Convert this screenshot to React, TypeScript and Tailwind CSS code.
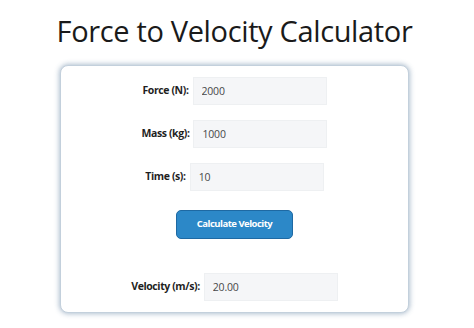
import { useState } from "react";

function Row({ label, value, onChange, readOnly }: { label: string; value: string; onChange?: (v: string) => void; readOnly?: boolean }) {
  return (
    <div className="flex items-center">
      <label className="text-[10.5px] font-bold tracking-[-0.4px] text-[#1f1f1f] mr-[4px]">{label}</label>
      <input
        className="w-[134px] h-[28px] bg-[#f5f6f8] border border-[#eef0f2] px-[8px] text-[10.5px] tracking-[-0.2px] text-[#484848] outline-none"
        value={value}
        readOnly={readOnly}
        onChange={(e) => onChange?.(e.target.value)}
      />
    </div>
  );
}

export default function App() {
  const [force, setForce] = useState("2000");
  const [mass, setMass] = useState("1000");
  const [time, setTime] = useState("10");
  const [velocity, setVelocity] = useState("20.00");

  const calc = () => {
    const v = (parseFloat(force) / parseFloat(mass)) * parseFloat(time);
    setVelocity(isNaN(v) ? "" : v.toFixed(2));
  };

  return (
    <div
      className="min-h-screen bg-white flex flex-col items-center"
      style={{ fontFamily: '"Open Sans", "Noto Sans", sans-serif' }}
    >
      <h1 className="text-[29px] tracking-[-0.35px] leading-[40px] text-[#1a1a1a] mt-[11px] ml-[-5px]">
        Force to Velocity Calculator
      </h1>
      <div className="w-[349px] mt-[14px] ml-[-5px] rounded-[8px] border border-[#c3d0dc] shadow-[0_0_5px_1px_rgba(80,115,150,0.45)] bg-white flex flex-col items-center pt-[11px] pb-[11px]">
        <div className="flex flex-col items-center gap-[15px]">
          <Row label="Force (N):" value={force} onChange={setForce} />
          <Row label="Mass (kg):" value={mass} onChange={setMass} />
          <Row label="Time (s):" value={time} onChange={setTime} />
        </div>
        <button
          onClick={calc}
          className="mt-[19px] w-[117px] h-[29px] rounded-[5px] bg-[#2c88c8] border border-[#1e69a3] text-white text-[9.5px] tracking-[-0.5px] font-bold"
        >
          Calculate Velocity
        </button>
        <div className="mt-[34px]">
          <Row label="Velocity (m/s):" value={velocity} readOnly />
        </div>
      </div>
    </div>
  );
}
